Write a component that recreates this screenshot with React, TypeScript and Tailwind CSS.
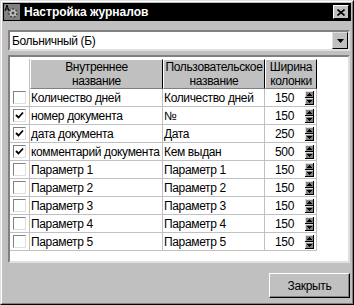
import React from 'react';

const rows = [
    { on: false, name: 'Количество дней', user: 'Количество дней', width: 150 },
    { on: true, name: 'номер документа', user: '№', width: 150 },
    { on: true, name: 'дата документа', user: 'Дата', width: 250 },
    { on: true, name: 'комментарий документа', user: 'Кем выдан', width: 500 },
    { on: false, name: 'Параметр 1', user: 'Параметр 1', width: 150 },
    { on: false, name: 'Параметр 2', user: 'Параметр 2', width: 150 },
    { on: false, name: 'Параметр 3', user: 'Параметр 3', width: 150 },
    { on: false, name: 'Параметр 4', user: 'Параметр 4', width: 150 },
    { on: false, name: 'Параметр 5', user: 'Параметр 5', width: 150 },
];

function CheckBox({ on }: { on: boolean }) {
    return (
        <div className="w-[13px] h-[13px] bg-white border-t border-l border-[#808080] border-r border-b border-r-[#dfdfdf] border-b-[#dfdfdf] flex items-center justify-center">
            {on && (
                <svg width="9" height="9" viewBox="0 0 9 9">
                    <path d="M1 4 L3.5 6.5 L8 1.5" stroke="#000" strokeWidth="1.8" fill="none" />
                </svg>
            )}
        </div>
    );
}

function Spinner() {
    return (
        <svg width="9" height="14" viewBox="0 0 9 14" shapeRendering="crispEdges">
            <rect x="0" y="0" width="9" height="7" fill="#000" />
            <rect x="0" y="0" width="8" height="6" fill="#dfdfdf" />
            <rect x="1" y="1" width="7" height="5" fill="#808080" />
            <path d="M4.5 2 L7 5 L2 5 Z" fill="#000" />
            <rect x="0" y="7" width="9" height="7" fill="#000" />
            <rect x="0" y="7" width="8" height="6" fill="#dfdfdf" />
            <rect x="1" y="8" width="7" height="5" fill="#808080" />
            <path d="M2 9 L7 9 L4.5 12 Z" fill="#000" />
        </svg>
    );
}

export default function App() {
    return (
        <div
            className="w-[354px] h-[305px] bg-[#c0c0c0] border border-t-[#dfdfdf] border-l-[#dfdfdf] border-r-black border-b-black text-black text-[12px] tracking-[-0.35px]"
            style={{ fontFamily: '"Liberation Sans", Arial, sans-serif' }}
        >
            <div className="h-full border border-t-white border-l-white border-r-[#808080] border-b-[#808080] p-px flex flex-col">
                {/* Title bar */}
                <div className="h-[18px] bg-black flex items-center pl-[1px] pr-[2px]">
                    <svg width="16" height="16" viewBox="0 0 16 16">
                        <rect x="0" y="0" width="16" height="16" fill="#808080" />
                        <circle cx="9" cy="9" r="4" fill="#c0c0c0" stroke="#404040" strokeWidth="1.5" strokeDasharray="2 1.5" />
                        <circle cx="9" cy="9" r="1.5" fill="#404040" />
                        <path d="M1 7 L3 1 L5 7 M2 5 L4 5" stroke="#000" strokeWidth="1" fill="none" />
                    </svg>
                    <span className="ml-[4px] text-white font-bold text-[12px] tracking-[0px]">Настройка журналов</span>
                    <div className="ml-auto w-[16px] h-[14px] bg-[#c0c0c0] border border-t-white border-l-white border-r-black border-b-black flex items-center justify-center">
                        <svg width="8" height="7" viewBox="0 0 8 7">
                            <path d="M0.5 0.5 L7.5 6.5 M7.5 0.5 L0.5 6.5" stroke="#000" strokeWidth="1.6" />
                        </svg>
                    </div>
                </div>

                <div className="flex-1 flex flex-col pl-[5px] pr-[1px] pt-[9px]">
                    {/* Combo */}
                    <div className="h-[21px] bg-white border-2 border-t-[#808080] border-l-[#808080] border-r-[#dfdfdf] border-b-[#dfdfdf] flex items-center">
                        <span className="pl-[2px] flex-1">Больничный (Б)</span>
                        <div className="w-[16px] h-[17px] bg-[#c0c0c0] border border-t-[#dfdfdf] border-l-[#dfdfdf] border-r-black border-b-black flex items-center justify-center">
                            <svg width="7" height="4" viewBox="0 0 7 4">
                                <path d="M0 0 L7 0 L3.5 4 Z" fill="#000" />
                            </svg>
                        </div>
                    </div>

                    {/* Grid */}
                    <div className="mt-[4px] h-[208px] bg-white border-2 border-t-[#808080] border-l-[#808080] border-r-[#dfdfdf] border-b-[#dfdfdf] pt-[2px]">
                        <div className="grid grid-cols-[20px_133px_102px_52px]">
                            <div className="h-[30px] bg-white border-r border-[#c0c0c0]" />
                            <div className="h-[30px] bg-[#c0c0c0] border-t border-l border-t-white border-l-white border-r border-b border-r-black border-b-[#808080] flex items-center justify-center text-center leading-[14px]">
                                Внутреннее<br />название
                            </div>
                            <div className="h-[30px] bg-[#c0c0c0] border-t border-l border-t-white border-l-white border-r border-b border-r-black border-b-[#808080] flex items-center justify-center text-center leading-[14px] whitespace-nowrap">
                                Пользовательское<br />название
                            </div>
                            <div className="h-[30px] bg-[#c0c0c0] border-t border-l border-t-white border-l-white border-r border-b border-r-black border-b-[#808080] flex items-center justify-center text-center leading-[14px]">
                                Ширина<br />колонки
                            </div>

                            {rows.map((r, i) => (
                                <React.Fragment key={i}>
                                    <div className="h-[18px] border-r border-b border-[#c0c0c0] flex items-center justify-center">
                                        <CheckBox on={r.on} />
                                    </div>
                                    <div className="h-[18px] border-r border-b border-[#c0c0c0] flex items-center pl-[1px] whitespace-nowrap overflow-hidden">
                                        {r.name}
                                    </div>
                                    <div className="h-[18px] border-r border-b border-[#c0c0c0] flex items-center pl-[1px] whitespace-nowrap overflow-hidden">
                                        {r.user}
                                    </div>
                                    <div className="h-[18px] border-r border-b border-[#c0c0c0] flex items-center justify-end pr-[2px] gap-[11px]">
                                        <span>{r.width}</span>
                                        <Spinner />
                                    </div>
                                </React.Fragment>
                            ))}
                        </div>
                    </div>

                    {/* Footer */}
                    <div className="flex justify-end mt-[10px]">
                        <button className="w-[81px] h-[25px] bg-[#c0c0c0] border border-t-white border-l-white border-r-black border-b-black shadow-[inset_-1px_-1px_0_#808080] text-[12px]">
                            Закрыть
                        </button>
                    </div>
                </div>
            </div>
        </div>
    );
}
